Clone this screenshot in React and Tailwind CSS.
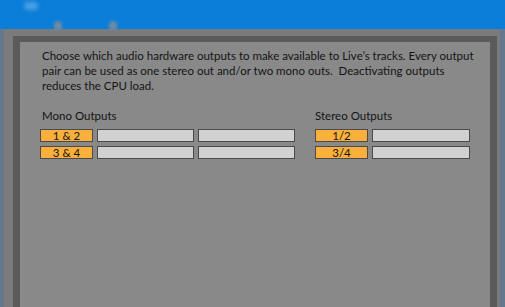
export default function App() {
  const mono = ['1 & 2', '3 & 4']
  const stereo = ['1/2', '3/4']

  return (
    <div className="w-[505px] h-[307px] overflow-hidden flex flex-col bg-[#7b7b7b] font-['Lato',sans-serif] text-[#141414]">
      <div className="h-[29px] shrink-0 bg-[#0a7ed8] relative">
        <div className="absolute left-[24px] top-[2px] w-[14px] h-[8px] rounded-full bg-[#4d9fe3] blur-[2px]" />
        <div className="absolute left-[54px] top-[21px] w-[8px] h-[9px] rounded-t-full bg-[#6f8aa3] blur-[1.5px]" />
        <div className="absolute left-[109px] top-[21px] w-[8px] h-[9px] rounded-t-full bg-[#6f8aa3] blur-[1.5px]" />
      </div>
      <div className="flex-1 flex">
        <div className="w-[4px] bg-[#66798c]" />
        <div className="flex-1 pt-[7px] pl-[9px] pr-[3px] flex">
          <div className="flex-1 bg-[#5b5b5b] pt-[6px] px-[7px] flex">
            <div className="flex-1 bg-[#898989] pl-[20px] pt-[6px]">
              <p className="pl-[2px] text-[11.5px] leading-[15px] whitespace-nowrap">
                Choose which audio hardware outputs to make available to Live’s tracks. Every output<br />
                pair can be used as one stereo out and/or two mono outs.&nbsp; Deactivating outputs<br />
                reduces the CPU load.
              </p>
              <div className="flex mt-[15px]">
                <div className="w-[275px]">
                  <div className="pl-[2px] text-[11.5px] leading-[15px] mb-[6px]">Mono Outputs</div>
                  <div className="flex flex-col gap-[4px]">
                    {mono.map(m => (
                      <div key={m} className="flex gap-[4px]">
                        <div className="w-[53px] h-[13px] bg-[#fbb03b] border border-[#4a4a4a] text-[11.5px] leading-[11px] text-center">{m}</div>
                        <div className="w-[97px] h-[13px] bg-[#d1d1d1] border border-[#4a4a4a]" />
                        <div className="w-[97px] h-[13px] bg-[#d1d1d1] border border-[#4a4a4a]" />
                      </div>
                    ))}
                  </div>
                </div>
                <div>
                  <div className="text-[11.5px] leading-[15px] mb-[6px]">Stereo Outputs</div>
                  <div className="flex flex-col gap-[4px]">
                    {stereo.map(s => (
                      <div key={s} className="flex gap-[4px]">
                        <div className="w-[53px] h-[13px] bg-[#fbb03b] border border-[#4a4a4a] text-[11.5px] leading-[11px] text-center">{s}</div>
                        <div className="w-[98px] h-[13px] bg-[#d1d1d1] border border-[#4a4a4a]" />
                      </div>
                    ))}
                  </div>
                </div>
              </div>
            </div>
          </div>
        </div>
        <div className="w-[5px] bg-[#64798e]" />
      </div>
    </div>
  )
}
